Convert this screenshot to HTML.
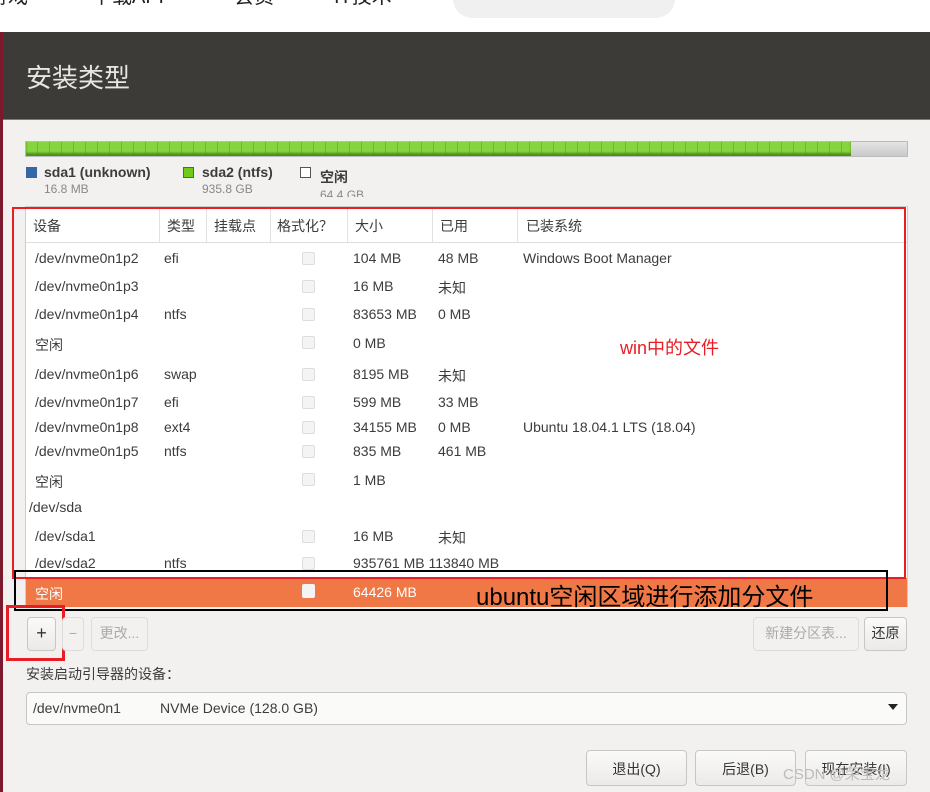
<!DOCTYPE html>
<html><head><meta charset="utf-8"><style>
*{margin:0;padding:0;box-sizing:border-box}
body{width:930px;height:792px;overflow:hidden;background:#fff;position:relative;font-family:"Liberation Sans","Noto Sans CJK SC",sans-serif;color:#3c3c3c}
.a{position:absolute;white-space:nowrap}
.t{font-size:14px}
.cb{position:absolute;left:302px;width:13px;height:13px;border:1px solid #ddd;border-radius:2px;background:#f4f4f4}
.btn{position:absolute;border:1px solid #c8c6c3;border-radius:4px;background:linear-gradient(#fafaf9,#eceae8);font-size:14px;text-align:center}
</style></head><body>
<div class="a" style="top:-20px;left:-12px;font-size:20px;color:#222">游戏</div>
<div class="a" style="top:-20px;left:92px;font-size:20px;color:#222">下载APP</div>
<div class="a" style="top:-20px;left:234px;font-size:20px;color:#222">会员</div>
<div class="a" style="top:-20px;left:334px;font-size:20px;color:#222">IT技术</div>
<div class="a" style="top:-20px;left:453px;width:222px;height:38px;border-radius:19px;background:#f0f0f0"></div>

<div class="a" style="top:32px;left:0;width:930px;height:88px;background:#3d3b37"></div>
<div class="a" style="top:32px;left:0;width:3px;height:760px;background:#7a1a2c"></div>
<div class="a" style="top:58px;left:26px;font-size:26px;color:#e8e6e3">安装类型</div>
<div class="a" style="top:119px;left:3px;width:927px;height:673px;background:#f2f1f0;border-top:1px solid #7d7b78"></div>

<div class="a" style="top:141px;left:25px;width:883px;height:16px;border:1px solid #bbb;background:linear-gradient(#e4e4e4,#c9c9c9)"></div>
<div class="a" style="top:142px;left:26px;width:825px;height:14px;background:repeating-linear-gradient(90deg,#86d43f 0 11px,#6fb52e 11px 12px);box-shadow:inset 0 -3px 2px #4e8e1a"></div>

<div class="a" style="top:167px;left:26px;width:11px;height:11px;background:#3566a6"></div>
<div class="a t" style="top:164px;left:44px;font-weight:bold">sda1 (unknown)</div>
<div class="a" style="top:182px;left:44px;font-size:12px;color:#888">16.8 MB</div>
<div class="a" style="top:167px;left:183px;width:11px;height:11px;background:#6fca1a;border:1px solid #3c7d0e"></div>
<div class="a t" style="top:164px;left:202px;font-weight:bold">sda2 (ntfs)</div>
<div class="a" style="top:182px;left:202px;font-size:12px;color:#888">935.8 GB</div>
<div class="a" style="top:167px;left:300px;width:11px;height:11px;background:#fff;border:1px solid #555"></div>
<div class="a t" style="top:167px;left:320px;font-weight:bold">空闲</div>
<div class="a" style="top:188px;left:320px;font-size:12px;color:#888;height:9px;overflow:hidden">64.4 GB</div>

<div class="a" style="top:206px;left:25px;width:883px;height:401px;background:#fff;border:1px solid #ccc"></div>
<div class="a" style="top:242px;left:26px;width:881px;height:1px;background:#ddd"></div>
<div class="a" style="top:207px;left:159px;width:1px;height:35px;background:#e2e2e2"></div>
<div class="a" style="top:207px;left:206px;width:1px;height:35px;background:#e2e2e2"></div>
<div class="a" style="top:207px;left:270px;width:1px;height:35px;background:#e2e2e2"></div>
<div class="a" style="top:207px;left:347px;width:1px;height:35px;background:#e2e2e2"></div>
<div class="a" style="top:207px;left:432px;width:1px;height:35px;background:#e2e2e2"></div>
<div class="a" style="top:207px;left:517px;width:1px;height:35px;background:#e2e2e2"></div>
<div class="a t" style="top:216px;left:33px">设备</div>
<div class="a t" style="top:216px;left:167px">类型</div>
<div class="a t" style="top:216px;left:214px">挂载点</div>
<div class="a t" style="top:216px;left:277px">格式化？</div>
<div class="a t" style="top:216px;left:355px">大小</div>
<div class="a t" style="top:216px;left:440px">已用</div>
<div class="a t" style="top:216px;left:526px">已装系统</div>

<div class="a t" style="top:250px;left:35px">/dev/nvme0n1p2</div><div class="a t" style="top:250px;left:164px">efi</div><div class="cb" style="top:252px"></div><div class="a t" style="top:250px;left:353px">104 MB</div><div class="a t" style="top:250px;left:438px">48 MB</div><div class="a t" style="top:250px;left:523px">Windows Boot Manager</div>
<div class="a t" style="top:278px;left:35px">/dev/nvme0n1p3</div><div class="cb" style="top:280px"></div><div class="a t" style="top:278px;left:353px">16 MB</div><div class="a t" style="top:278px;left:438px">未知</div>
<div class="a t" style="top:306px;left:35px">/dev/nvme0n1p4</div><div class="a t" style="top:306px;left:164px">ntfs</div><div class="cb" style="top:308px"></div><div class="a t" style="top:306px;left:353px">83653 MB</div><div class="a t" style="top:306px;left:438px">0 MB</div>
<div class="a t" style="top:335px;left:35px">空闲</div><div class="cb" style="top:336px"></div><div class="a t" style="top:335px;left:353px">0 MB</div>
<div class="a" style="top:334px;left:620px;font-size:18px;color:#ea1c24">win中的文件</div>
<div class="a t" style="top:366px;left:35px">/dev/nvme0n1p6</div><div class="a t" style="top:366px;left:164px">swap</div><div class="cb" style="top:368px"></div><div class="a t" style="top:366px;left:353px">8195 MB</div><div class="a t" style="top:366px;left:438px">未知</div>
<div class="a t" style="top:394px;left:35px">/dev/nvme0n1p7</div><div class="a t" style="top:394px;left:164px">efi</div><div class="cb" style="top:396px"></div><div class="a t" style="top:394px;left:353px">599 MB</div><div class="a t" style="top:394px;left:438px">33 MB</div>
<div class="a t" style="top:419px;left:35px">/dev/nvme0n1p8</div><div class="a t" style="top:419px;left:164px">ext4</div><div class="cb" style="top:421px"></div><div class="a t" style="top:419px;left:353px">34155 MB</div><div class="a t" style="top:419px;left:438px">0 MB</div><div class="a t" style="top:419px;left:523px">Ubuntu 18.04.1 LTS (18.04)</div>
<div class="a t" style="top:443px;left:35px">/dev/nvme0n1p5</div><div class="a t" style="top:443px;left:164px">ntfs</div><div class="cb" style="top:445px"></div><div class="a t" style="top:443px;left:353px">835 MB</div><div class="a t" style="top:443px;left:438px">461 MB</div>
<div class="a t" style="top:472px;left:35px">空闲</div><div class="cb" style="top:473px"></div><div class="a t" style="top:472px;left:353px">1 MB</div>
<div class="a t" style="top:499px;left:29px">/dev/sda</div>
<div class="a t" style="top:528px;left:35px">/dev/sda1</div><div class="cb" style="top:530px"></div><div class="a t" style="top:528px;left:353px">16 MB</div><div class="a t" style="top:528px;left:438px">未知</div>
<div class="a" style="top:549px;left:26px;width:881px;height:22px;overflow:hidden"><div class="a t" style="top:6px;left:9px">/dev/sda2</div><div class="a t" style="top:6px;left:138px">ntfs</div><div class="cb" style="top:8px;left:276px"></div><div class="a t" style="top:6px;left:327px">935761 MB 113840 MB</div></div>

<div class="a" style="top:578px;left:26px;width:881px;height:29px;background:#f07746"></div>
<div class="a t" style="top:584px;left:35px;color:#fff">空闲</div>
<div class="a" style="top:584px;left:302px;width:13px;height:14px;background:#f4f4f4;border-radius:2px"></div>
<div class="a t" style="top:584px;left:353px;color:#fff">64426 MB</div>
<div class="a" style="top:577px;left:476px;font-size:24px;color:#000">ubuntu空闲区域进行添加分文件</div>

<div class="a" style="top:207px;left:12px;width:894px;height:372px;border:2px solid #ea1c24"></div>
<div class="a" style="top:570px;left:14px;width:874px;height:41px;border:2px solid #000"></div>

<div class="btn" style="top:617px;left:27px;width:29px;height:34px;line-height:31px;font-size:18px;color:#333">+</div>
<div class="a" style="top:605px;left:6px;width:59px;height:56px;border:3px solid #ea1c24"></div>
<div class="btn" style="top:617px;left:62px;width:22px;height:34px;line-height:31px;color:#aaa;background:#f2f1f0;border-color:#ddd">−</div>
<div class="btn" style="top:617px;left:91px;width:57px;height:34px;line-height:31px;color:#aaa;background:#f2f1f0;border-color:#ddd">更改...</div>
<div class="btn" style="top:617px;left:753px;width:106px;height:34px;line-height:31px;color:#aaa;background:#f2f1f0;border-color:#ddd">新建分区表...</div>
<div class="btn" style="top:617px;left:864px;width:43px;height:34px;line-height:31px;color:#333">还原</div>

<div class="a t" style="top:664px;left:26px">安装启动引导器的设备：</div>
<div class="btn" style="top:692px;left:26px;width:881px;height:33px;background:#fafaf9"></div>
<div class="a t" style="top:700px;left:33px">/dev/nvme0n1</div>
<div class="a t" style="top:700px;left:160px">NVMe Device (128.0 GB)</div>
<div class="a" style="top:704px;left:888px;width:0;height:0;border-left:5px solid transparent;border-right:5px solid transparent;border-top:6px solid #222"></div>

<div class="btn" style="top:750px;left:586px;width:101px;height:36px;line-height:36px;color:#333">退出(Q)</div>
<div class="btn" style="top:750px;left:695px;width:101px;height:36px;line-height:36px;color:#333">后退(B)</div>
<div class="btn" style="top:750px;left:805px;width:102px;height:36px;line-height:36px;color:#333">现在安装(I)</div>
<div class="a" style="top:763px;left:783px;font-size:15px;color:#bbb">CSDN @荣宝龙</div>
</body></html>
